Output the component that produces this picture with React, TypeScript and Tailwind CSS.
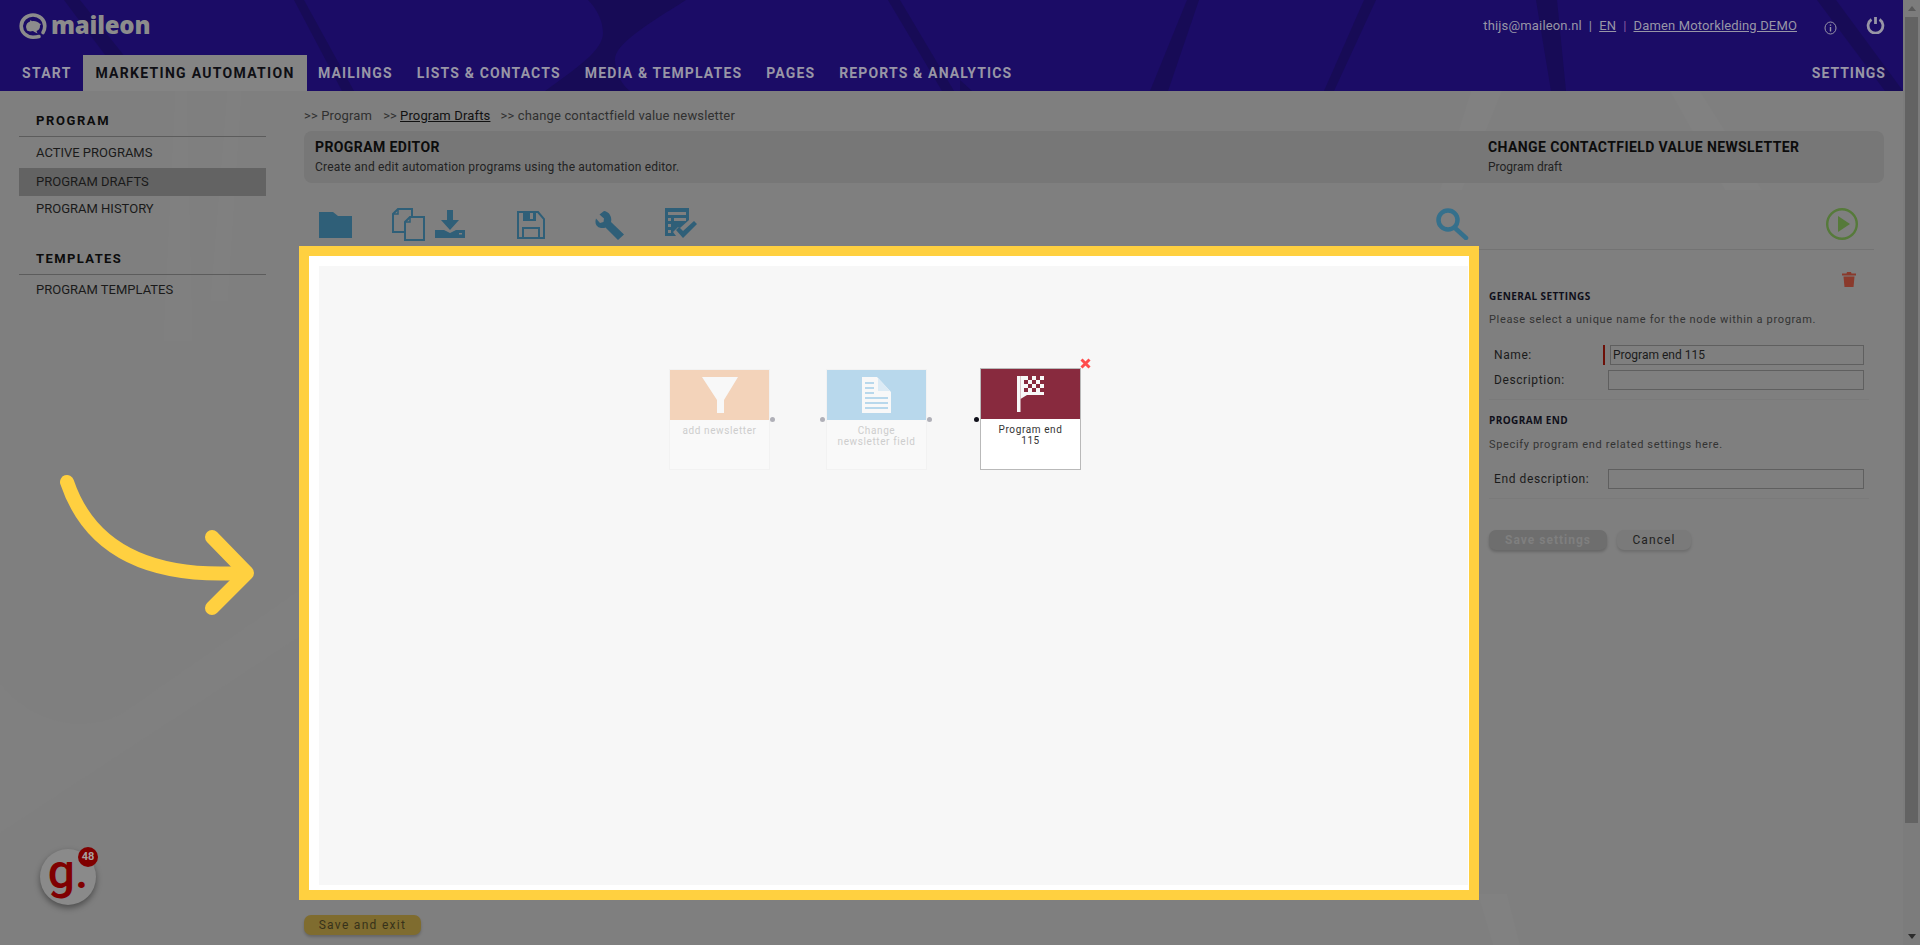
const navItems = ['MAILINGS', 'LISTS & CONTACTS', 'MEDIA & TEMPLATES', 'PAGES', 'REPORTS & ANALYTICS'];

const font = { fontFamily: 'Roboto, sans-serif' };

const HeaderBackground = () => (
  <svg className="absolute inset-0 h-full w-full" viewBox="0 0 1903 91" preserveAspectRatio="none" fill="#170b56">
    <path d="M64 0h16l72 91h-20z" />
    <path d="M294 0h10l50 91h-12z" />
    <path d="M588 0h98c-40 25-72 45-71 60 0 12 6 24 15 31h-85c30-22 58-40 58-58 0-12-6-24-15-33z" />
    <path d="M888 0h12l54 91h-12z" />
    <path d="M960 80l12 11h-12z" />
    <path d="M1187 0h12l-31 91h-18z" />
    <path d="M1364 0h12l-42 91h-10z" />
    <path d="M1536 0h21l9 91h-15z" />
    <path d="M1817 0h19l67 91h-18z" />
  </svg>
);

const MainBackground = () => (
  <svg className="absolute inset-0 h-full w-full" viewBox="0 91 1903 854" preserveAspectRatio="none" fill="#818181">
    <path d="M1471 91h31l-40 99-22 0z" />
    <path d="M1670 91h30l62 99h-37z" />
    <path d="M1478 894h29l13 51h-27z" />
    <path d="M175 91h12l6 250-30 0z" fill="#808080" />
    <path d="M227 91h15l-14 210h-18z" fill="#808080" />
    <path d="M0 683c30 40 90 55 130 25L299 590v47L0 833z" fill="#808080" />
  </svg>
);

const Logo = () => (
  <div className="flex items-start">
    <svg className="mt-[3px]" width="28" height="26" viewBox="0 0 28 26" fill="none">
      <path
        d="M20 23.500c-2 .6-4 .7-6 .7C7.600 24.200 2.200 19.500 2.200 13S7.600 2 14 2s11.800 4.500 11.800 11c0 2.500-.5 4.500-1.800 6.500"
        stroke="#8c8c8c"
        strokeWidth="3.600"
        strokeLinecap="round"
      />
      <path d="M7 14c0-3 2-5 4-5.500L11.500 7l1.500 1.200c3-.5 6 .5 7.500 2.300l1.500.5-1 1.500c.3 3-1.500 5-3.500 5.500l1 2.500-3-1.500-1.500-1-3 .5-3-1z" fill="#8c8c8c" />
    </svg>
    <span
      className="ml-[4px] text-[24px] leading-[30px] font-extrabold tracking-[-0.2px] text-[#8c8c8c]"
      style={{ fontFamily: '"Open Sans", sans-serif' }}
    >
      maileon
    </span>
  </div>
);

const ToolbarIcons = () => (
  <div className="flex h-[63px] items-start pt-[25px] pl-[15px] pr-[26px]">
    {/* folder */}
    <svg className="mt-[4px]" width="33" height="26" viewBox="0 0 33 26" fill="#2f5f78">
      <path d="M0 0h14l5 4h14v22H0z" />
    </svg>
    {/* copy */}
    <svg className="ml-[40px]" width="33" height="33" viewBox="0 0 33 33" fill="none" stroke="#2f5f78" strokeWidth="2">
      <path d="M13 24H1V6l5-5h14v8" />
      <path d="M18 9h14v23H13V14z" />
      <path d="M6 2v4H2M18 10v4h-4" strokeWidth="1.500" />
    </svg>
    {/* download */}
    <svg className="mt-[2px] ml-[10px]" width="30" height="28" viewBox="0 0 30 28" fill="#2f5f78">
      <path d="M12 0h6v10h6l-9 10-9-10h6z" />
      <path d="M0 20h9l6 3 6-3h9v8H0z" />
      <path d="M24 23h3v1.500h-3z" fill="#7f7f7f" />
    </svg>
    {/* save */}
    <svg className="mt-[3px] ml-[52px]" width="28" height="28" viewBox="0 0 28 28" fill="none" stroke="#2f5f78" strokeWidth="2">
      <path d="M1 1h20l6 7v19H1z" />
      <path d="M6 1h13v9H6z" fill="#2f5f78" stroke="none" />
      <path d="M6 27V17h16v10" />
      <path d="M13 2h3v6h-3z" fill="#7f7f7f" stroke="none" />
    </svg>
    {/* wrench */}
    <svg className="mt-[3px] ml-[50px]" width="29" height="29" viewBox="0 0 29 29" fill="#2f5f78">
      <path d="M9 0L4.500 3.500 9 7.500 8.500 11 5 12 1 7.500C-.5 12 1 16 6 17c2 .3 3.500 0 4.500-.5L23 29l6-5.500L16 11c.7-3 0-6-2-8.500C13 1.300 11 .3 9 0z" />
    </svg>
    {/* checklist */}
    <svg className="ml-[41px]" width="32" height="30" viewBox="0 0 32 30" fill="#2f5f78">
      <path fillRule="evenodd" d="M0 0h24v12l-9 8-2-1-5 5 3 4H0zM3 4v3h18V4zM3 10v3h3v-3zM9 10v3h12v-3zM3 16v3h3v-3zM3 22v3h3v-3z" />
      <path d="M11 22l3-3 4 4L29 13l3 3-14 14z" />
    </svg>
    {/* search */}
    <svg className="ml-auto" width="33" height="32" viewBox="0 0 33 32" fill="none" stroke="#35708c">
      <circle cx="12" cy="12" r="9.500" strokeWidth="4.500" />
      <path d="M19 20l11 10" strokeWidth="4.500" strokeLinecap="round" />
    </svg>
    {/* play */}
    <svg className="ml-[357px]" width="32" height="32" viewBox="0 0 32 32" fill="none">
      <circle cx="16" cy="16" r="14.800" stroke="#567a3a" strokeWidth="2.400" />
      <path d="M12 8l12 8-12 8z" fill="#567a3a" />
    </svg>
  </div>
);

const Node = ({
  color,
  label,
  children,
  active,
}: {
  color: string;
  label: string[];
  children: React.ReactNode;
  active?: boolean;
}) => (
  <div
    className={`w-[101px] border ${active ? 'h-[102px] border-[#b9b9b9] bg-white text-[#333333]' : 'h-[101px] border-[#f2f2f2] bg-[#f9f9f9] text-[#cdcdcd]'}`}
  >
    <div className="flex h-[50px] items-center justify-center" style={{ backgroundColor: color }}>
      {children}
    </div>
    <div className="pt-[5px] text-center text-[10px] leading-[11px] tracking-[0.6px]" style={font}>
      {label.map(line => (
        <div key={line}>{line}</div>
      ))}
    </div>
  </div>
);

const Field = ({ label, value, marked }: { label: string; value?: string; marked?: boolean }) => (
  <div className="flex h-[20px] items-center pl-[5px]">
    <span className={`text-[12px] tracking-[0.6px] text-[#1b1b1b] ${marked ? 'w-[109px]' : 'w-[114px]'}`}>{label}</span>
    {marked ? <span className="h-[20px] w-[2px] bg-[#6d1008]" /> : null}
    <div
      className={`flex h-[20px] items-center border border-[#5f5f5f] pl-[2px] text-[12px] text-[#1b1b1b] ${marked ? 'ml-[5px] w-[254px]' : 'w-[256px]'}`}
    >
      {value}
    </div>
  </div>
);

const SectionTitle = ({ children }: { children: React.ReactNode }) => (
  <h3 className="text-[10px] leading-[12px] font-bold tracking-[0.4px] text-[#0f0f1a]" style={{ fontFamily: '"Open Sans", sans-serif' }}>
    {children}
  </h3>
);

const SettingsPanel = () => (
  <div className="flex-1 pl-[10px] text-[#333333]" style={font}>
    <div className="h-[4px] w-[395px] -ml-[10px] border-b border-[#737373]" />
    <div className="mt-[22px] flex h-[14px] w-[367px] justify-end">
      <svg width="14" height="15" viewBox="0 0 14 15" fill="#8a3a2c">
        <path d="M5 0h4l.5 1.500H14v2H0v-2h4.500z" />
        <path d="M1.500 4.500h11L11.500 15h-9z" />
      </svg>
    </div>
    <div className="mt-[4px]">
      <SectionTitle>GENERAL SETTINGS</SectionTitle>
    </div>
    <p className="mt-[11px] text-[11px] leading-[13px] tracking-[0.65px] text-[#333333]">
      Please select a unique name for the node within a program.
    </p>
    <div className="mt-[19px] flex flex-col gap-[5px]">
      <Field label="Name:" value="Program end 115" marked />
      <Field label="Description:" />
    </div>
    <div className="mt-[9px] w-[380px] border-b border-[#7a7a7a]" />
    <div className="mt-[14px]">
      <SectionTitle>PROGRAM END</SectionTitle>
    </div>
    <p className="mt-[12px] text-[11px] leading-[13px] tracking-[0.65px] text-[#333333]">
      Specify program end related settings here.
    </p>
    <div className="mt-[18px]">
      <Field label="End description:" />
    </div>
    <div className="mt-[9px] w-[380px] border-b border-[#7a7a7a]" />
    <div className="mt-[31px] flex gap-[10px]">
      <button className="h-[20px] w-[118px] rounded-[7px] bg-[#6e6e6e] text-[12px] font-bold tracking-[1px] text-[#7f7f7f] shadow-[0_2px_3px_rgba(0,0,0,0.2)]">
        Save settings
      </button>
      <button className="h-[20px] w-[74px] rounded-[7px] bg-[#7a7a7a] text-[12px] tracking-[1.1px] text-[#222222] shadow-[0_2px_3px_rgba(0,0,0,0.15)]">
        Cancel
      </button>
    </div>
  </div>
);

const Canvas = () => (
  <div className="h-[654px] w-[1180px] shrink-0 border-[10px] border-[#ffd040] bg-white pt-[10px] pr-[1px] pb-[5px] pl-[10px]">
    <div className="h-full w-full bg-[#f7f7f7] pl-[350px] pt-[103px]">
      <div className="flex items-start">
        <div className="relative">
          <Node color="#f3d3ba" label={['add newsletter']}>
            <svg width="36" height="36" viewBox="0 0 36 36" fill="#f8f8f8">
              <path d="M0 0h36L22 23v13h-7V23z" />
            </svg>
          </Node>
          <span className="absolute top-[48px] -right-[5px] h-[5px] w-[5px] rounded-full bg-[#b0b0b8]" />
        </div>
        <div className="relative ml-[56px]">
          <Node color="#b8d8ec" label={['Change', 'newsletter field']}>
            <svg width="29" height="36" viewBox="0 0 29 36">
              <path d="M0 0h15l14 15v21H0z" fill="#f8f8f8" />
              <path d="M16 1l12 13H16z" fill="#dcebf5" />
              <path d="M3 5h9v2H3zM3 10h9v2H3zM3 15h9v2H3zM3 20h23v2H3zM3 25h23v2H3zM3 30h23v2H3z" fill="#b8d8ec" />
            </svg>
          </Node>
          <span className="absolute top-[48px] -left-[6px] h-[5px] w-[5px] rounded-full bg-[#b0b0b8]" />
          <span className="absolute top-[48px] -right-[5px] h-[5px] w-[5px] rounded-full bg-[#b0b0b8]" />
        </div>
        <div className="relative ml-[53px] -mt-[1px]">
          <Node color="#882a3e" label={['Program end', '115']} active>
            <svg width="27" height="36" viewBox="0 0 27 36" fill="#f8f8f8">
              <path d="M0 0h3.500v36H0z" />
              <path d="M3.500 0H27v19H10l-6.500 4z" />
              <path
                d="M7 4h4v4H7zM15 4h4v4h-4zM23 4h4v4h-4zM11 0h4v4h-4zM19 0h4v4h-4zM11 8h4v4h-4zM19 8h4v4h-4zM7 12h4v4H7zM15 12h4v4h-4zM23 12h4v4h-4z"
                fill="#882a3e"
              />
            </svg>
          </Node>
          <span className="absolute top-[49px] -left-[6px] h-[5px] w-[5px] rounded-full bg-[#10101a]" />
          <svg className="absolute -top-[10px] -right-[10px]" width="11" height="11" viewBox="0 0 11 11" stroke="#ff4d4d" strokeWidth="3">
            <path d="M1.500 1.500l8 8M9.500 1.500l-8 8" />
          </svg>
        </div>
      </div>
    </div>
  </div>
);

const App = () => {
  return (
    <div className="flex h-screen w-full overflow-hidden bg-[#7f7f7f]">
      <div className="min-w-0 flex-1">
        <header className="relative h-[91px] bg-[#1b0c66]" style={font}>
          <HeaderBackground />
          <div className="relative flex h-[55px] items-start justify-between pt-[10px] pl-[19px] pr-[18px]">
            <Logo />
            <div className="flex items-center pt-[6px] text-[13px] tracking-[0.15px] text-[#9896a6]">
              <span>thijs@maileon.nl</span>
              <span className="mx-[7px]">|</span>
              <span className="underline">EN</span>
              <span className="mx-[7px] text-[#8a5aa0]">|</span>
              <span className="underline">Damen Motorkleding DEMO</span>
              <svg className="mt-[4px] ml-[27px]" width="13" height="14" viewBox="0 0 13 14" fill="none" stroke="#9896a6">
                <ellipse cx="6.500" cy="7" rx="5.500" ry="6" strokeWidth="1" />
                <path d="M6.500 6v4.500M6.500 3.500v1.200" strokeWidth="1.400" />
              </svg>
              <svg className="-mt-[1px] ml-[29px]" width="19" height="18" viewBox="0 0 19 18" fill="none" stroke="#9896a6" strokeWidth="2.800">
                <path d="M5.500 3.500a7.400 7.400 0 1 0 8 0" />
                <path d="M9.500 1v7" />
              </svg>
            </div>
          </div>
          <nav className="relative flex h-[36px] items-stretch justify-between pr-[17px] text-[14px] font-bold tracking-[1.15px] text-[#9896a6]">
            <div className="flex items-stretch pl-[22px]">
              <div className="flex w-[61px] items-center tracking-[1.3px]">START</div>
              <div className="flex w-[224px] items-center justify-center bg-[#848484] tracking-[1.3px] text-[#0f0f14]">MARKETING AUTOMATION</div>
              <div className="flex items-center gap-[24px] pl-[11px]">
                {navItems.map(item => (
                  <span key={item}>{item}</span>
                ))}
              </div>
            </div>
            <div className="flex items-center tracking-[1px]">SETTINGS</div>
          </nav>
        </header>

        <main className="relative flex h-[854px] text-[#111111]" style={font}>
          <MainBackground />
          <aside className="relative w-[304px] shrink-0 pl-[19px] pr-[38px] text-[13px] text-[#1a1a1a]">
            <div className="flex h-[46px] items-end border-b border-[#5c5c5c] pb-[6px] pl-[17px] text-[13px] font-bold tracking-[1.6px] text-[#0c0c0c]">
              PROGRAM
            </div>
            <div className="flex h-[31px] items-center pl-[17px]">ACTIVE PROGRAMS</div>
            <div className="flex h-[28px] items-center bg-[#636363] pl-[17px]">PROGRAM DRAFTS</div>
            <div className="flex h-[26px] items-center pl-[17px]">PROGRAM HISTORY</div>
            <div className="mt-[22px] flex h-[31px] items-end border-b border-[#5c5c5c] pb-[6px] pl-[17px] text-[13px] font-bold tracking-[1.4px] text-[#0c0c0c]">
              TEMPLATES
            </div>
            <div className="flex h-[30px] items-center pl-[17px]">PROGRAM TEMPLATES</div>
          </aside>

          <section className="relative min-w-0 flex-1 pr-[19px]">
            <div className="flex h-[40px] items-end pb-[6px] text-[13px] tracking-[0.15px] text-[#303030]">
              <span>&gt;&gt; Program</span>
              <span className="ml-[11px]">&gt;&gt; </span>
              <span className="ml-[3px] text-[#111111] underline">Program Drafts</span>
              <span className="ml-[10px]">&gt;&gt; change contactfield value newsletter</span>
            </div>
            <div className="flex h-[52px] justify-between rounded-[8px] bg-[#777777] pt-[8px] pl-[11px]">
              <div>
                <h1 className="text-[14px] leading-[16px] font-bold tracking-[0.4px] text-[#0c0c0c]">PROGRAM EDITOR</h1>
                <p className="mt-[5px] text-[12px] leading-[14px] tracking-[0.2px] text-[#222222]">Create and edit automation programs using the automation editor.</p>
              </div>
              <div className="w-[396px]">
                <h2 className="text-[14px] leading-[16px] font-bold tracking-[0.4px] text-[#0c0c0c]">CHANGE CONTACTFIELD VALUE NEWSLETTER</h2>
                <p className="mt-[5px] text-[12px] leading-[14px] text-[#222222]">Program draft</p>
              </div>
            </div>
            <ToolbarIcons />
            <div className="-ml-[5px] flex">
              <Canvas />
              <SettingsPanel />
            </div>
            <button className="mt-[15px] h-[20px] w-[117px] rounded-[7px] bg-[#7f6c2f] text-[12px] tracking-[1.300px] text-[#37321a] shadow-[0_2px_3px_rgba(0,0,0,0.2)]">
              Save and exit
            </button>
          </section>

          {/* help badge */}
          <div className="absolute top-[758px] left-[40px] flex h-[56px] w-[56px] items-center justify-center rounded-full bg-[#8a8a8a] shadow-[0_3px_6px_rgba(0,0,0,0.4)]">
            <span className="-mt-[10px] text-[48px] leading-none font-medium text-[#800000]" style={font}>
              g.
            </span>
            <span className="absolute -top-[2px] -right-[2px] flex h-[20px] w-[20px] items-center justify-center rounded-full bg-[#800000] text-[11px] font-bold text-[#a8a0a0]">
              48
            </span>
          </div>

          {/* arrow */}
          <svg className="absolute top-[349px] left-0" width="280" height="180" viewBox="0 440 280 180" fill="none" stroke="#ffd040" strokeWidth="14" strokeLinecap="round" strokeLinejoin="round">
            <path d="M67 482C90 550 150 578 240 573" />
            <path d="M212 537l35 36-35 35" />
          </svg>
        </main>
      </div>

      {/* scrollbar */}
      <div className="flex w-[17px] shrink-0 flex-col bg-[#7c7c7c]">
        <div className="flex h-[17px] items-center justify-center">
          <span className="h-0 w-0 border-x-[4px] border-b-[5px] border-x-transparent border-b-[#5a5a5a]" />
        </div>
        <div className="ml-[2px] h-[806px] w-[13px] bg-[#636363]" />
        <div className="flex-1" />
        <div className="flex h-[17px] items-center justify-center">
          <span className="h-0 w-0 border-x-[4px] border-t-[5px] border-x-transparent border-t-[#2c2c2c]" />
        </div>
      </div>
    </div>
  );
};

export default App;
